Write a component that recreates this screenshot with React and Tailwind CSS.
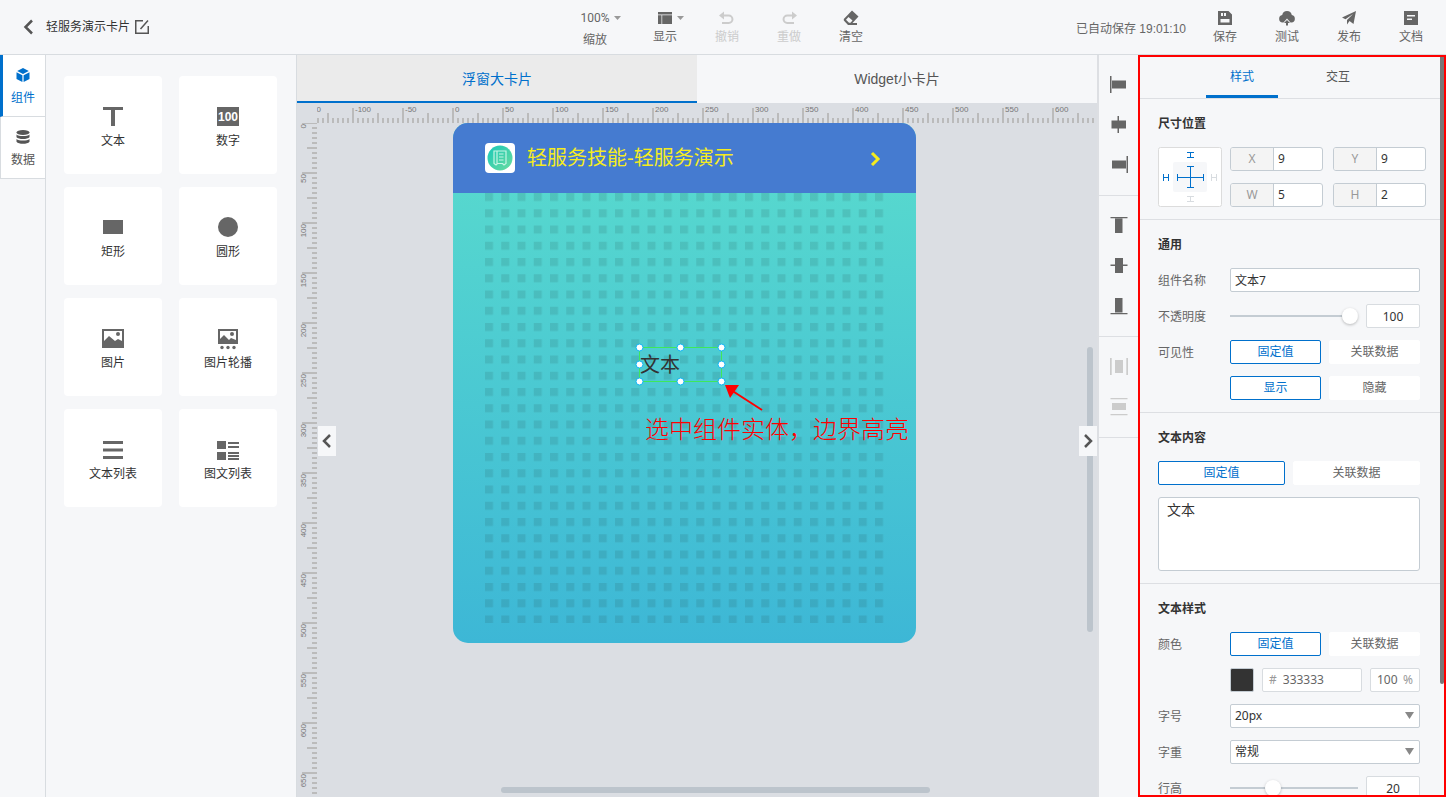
import React, { useLayoutEffect, useRef, useState } from 'react';

const DARK = '#666666';

const paletteItems = [
  { id: 'text', label: '文本' },
  { id: 'number', label: '数字' },
  { id: 'rect', label: '矩形' },
  { id: 'circle', label: '圆形' },
  { id: 'image', label: '图片' },
  { id: 'carousel', label: '图片轮播' },
  { id: 'list', label: '文本列表' },
  { id: 'imageList', label: '图文列表' }
];

const alignGroups = [
  [
    { id: 'left', label: '左对齐' },
    { id: 'hcenter', label: '水平居中' },
    { id: 'right', label: '右对齐' }
  ],
  [
    { id: 'top', label: '顶对齐' },
    { id: 'vcenter', label: '垂直居中' },
    { id: 'bottom', label: '底对齐' }
  ],
  [
    { id: 'hspace', label: '水平分布', disabled: true },
    { id: 'vspace', label: '垂直分布', disabled: true }
  ]
];

const PaletteIcon = ({ id }) => (
  <svg width="24" height="24" viewBox="0 0 24 24" fill={DARK} aria-hidden="true">
    {id === 'text' && <path d="M2 2h20v3h-8v16h-4V5H2z" />}
    {id === 'number' && (
      <>
        <rect x="1" y="2" width="22" height="19" />
        <text x="12" y="16" fontSize="12" fontWeight="700" fill="#fff" textAnchor="middle" fontFamily="Liberation Sans, sans-serif">100</text>
      </>
    )}
    {id === 'rect' && <rect x="2" y="4" width="20" height="14" />}
    {id === 'circle' && <circle cx="12" cy="11" r="10" />}
    {id === 'image' && (
      <path fillRule="evenodd" d="M1 2h22v19H1zM3 4v10l5-5 6 5 3-2 4 2V4zM17 5a2 2 0 1 1 0 4a2 2 0 0 1 0-4z" />
    )}
    {id === 'carousel' && (
      <>
        <path fillRule="evenodd" d="M2 2h20v15H2zM4 4v8l4-4 5 5 2-2 5 2V4zM16 5a2 2 0 1 1 0 4a2 2 0 0 1 0-4z" />
        <circle cx="6" cy="20.500" r="1.700" />
        <circle cx="12" cy="20.500" r="1.700" />
        <circle cx="18" cy="20.500" r="1.700" />
      </>
    )}
    {id === 'list' && <path d="M2 3h20v3H2zM2 10.500h20v3H2zM2 18h20v3H2z" />}
    {id === 'imageList' && (
      <path d="M1 3h9v8H1zM1 14h9v8H1zM12 4h11v2H12zM12 8h11v2H12zM12 14h11v2H12zM12 17h11v2H12zM12 20h11v2H12z" />
    )}
  </svg>
);

const AlignIcon = ({ id, disabled }) => (
  <svg width="20" height="20" viewBox="0 0 20 20" fill={disabled ? '#cccccc' : DARK} aria-hidden="true">
    {id === 'left' && <path d="M1 2h1.500v17H1zM3 6.500h14v8H3z" />}
    {id === 'hcenter' && <path d="M8.500 2h1.500v4.500h7v8h-7v4.500H8.500v-4.500H2.500v-8h6z" />}
    {id === 'right' && <path d="M17.500 2H19v17h-1.500zM3 6.500h14v8H3z" />}
    {id === 'top' && <path d="M1.500 2h17v1.200h-17zM6 3.500h7.500v14.500H6z" />}
    {id === 'vcenter' && <path d="M6 3h8v6.500h4.500V11H14v7H6v-7H1.500V9.500H6z" />}
    {id === 'bottom' && <path d="M1.500 18h17v1.200h-17zM6 3h7.500v14.500H6z" />}
    {id === 'hspace' && <path d="M1 2h1.700v17H1zM17.300 2H19v17h-1.700zM6 4h8v13H6z" />}
    {id === 'vspace' && <path d="M1.500 2h17v1.300h-17zM1.500 18h17v1.300h-17zM3 7h14v7H3z" />}
  </svg>
);

const ToolIcon = ({ id }) => (
  <svg width="16" height="16" viewBox="0 0 16 16" fill="currentColor" aria-hidden="true">
    {id === 'display' && <path d="M1 2h14v2.500H1zM1 5.300h3.500V14H1zM5.200 5.300H15V14H5.200z" />}
    {id === 'undo' && (
      <path d="M0 5.500l5-4v3h4.700a4.700 4.700 0 0 1 0 9.500H3v-2h6.700a2.700 2.700 0 0 0 0-5.500H5V9.500z" />
    )}
    {id === 'redo' && (
      <path d="M16 5.500l-5-4v3H6.300a4.700 4.700 0 0 0 0 9.500H13v-2H6.300a2.700 2.700 0 0 1 0-5.500H11V9.500z" />
    )}
    {id === 'clear' && (
      <path fillRule="evenodd" d="M9 .5l6.500 6-6 6.500H14v2H5L.8 10.500V9zM5.500 7L3 9.700l3 3h1.500L9.500 10.500z" />
    )}
    {id === 'save' && (
      <path fillRule="evenodd" d="M1 1h10.500L15 4.500V15H1zM4 3v3h2V3zM7 3v3h2V3zM3.500 9v3.500h9V9z" />
    )}
    {id === 'test' && (
      <path d="M8 1a5 5 0 0 1 4.800 4A3.800 3.800 0 0 1 12.500 12.500h-1L8 8.500l-3.500 4h-1A3.800 3.800 0 0 1 3.200 5 5 5 0 0 1 8 1zM8 10l3 3H9v2.500H7V13H5z" />
    )}
    {id === 'publish' && <path d="M15 1l-2.500 13-4-3L6 14.500V10l6-6-7.500 5.200L1 7.500z" />}
    {id === 'docs' && (
      <path fillRule="evenodd" d="M1 1h14v14H1zM4 5v1.500h8V5zM4 8.500V10h5V8.500z" />
    )}
  </svg>
);

const Caret = () => (
  <svg className="ml-1 text-[#999999]" width="7" height="4" viewBox="0 0 7 4" fill="currentColor" aria-hidden="true">
    <path d="M0 0h7L3.500 4z" />
  </svg>
);

const ToolButton = ({ id, label, disabled, caret }) => (
  <button
    type="button"
    disabled={disabled}
    className={`flex w-[62px] flex-col items-center gap-0.5 ${disabled ? 'text-[#cccccc]' : 'text-[#666666]'}`}
  >
    <span className="grid w-full grid-cols-[1fr_auto_1fr] items-center">
      <span />
      <ToolIcon id={id} />
      {caret ? <Caret /> : <span />}
    </span>
    <span className="leading-[18px]">{label}</span>
  </button>
);

// Marks from `from` up to `to`, one every 5 units
const rulerMarks = (from, to) => {
  const marks = [];
  for (let v = from; v <= to; v += 5) marks.push(v);
  return marks;
};

const markLength = (v) => (v % 50 === 0 ? 15 : v % 25 === 0 ? 10 : 5);

const useSize = () => {
  const ref = useRef(null);
  const [size, setSize] = useState({ width: 0, height: 0 });

  useLayoutEffect(() => {
    const update = () => {
      const { width, height } = ref.current.getBoundingClientRect();
      setSize({ width, height });
    };
    update();
    window.addEventListener('resize', update);
    return () => window.removeEventListener('resize', update);
  }, []);

  return [ref, size];
};

const HorizontalRuler = () => {
  const [ref, { width }] = useSize();
  const marks = rulerMarks(-150, width - 138);
  return (
    <div ref={ref} className="h-5 min-w-0 flex-1">
      <svg className="h-full w-full" fill="#bbbbbb" aria-hidden="true">
        {marks.map((v) => (
          <rect key={v} x={v + 135} y={20 - markLength(v)} width="2" height={markLength(v)} />
        ))}
        {marks.filter((v) => v % 50 === 0 && v + 156 < width).map((v) => (
          <text key={v} x={v + 138} y="9" fontSize="8" fill="#777777">{v}</text>
        ))}
      </svg>
    </div>
  );
};

const VerticalRuler = () => {
  const [ref, { height }] = useSize();
  const marks = rulerMarks(0, height);
  return (
    <div ref={ref} className="w-5 shrink-0">
      <svg className="h-full w-full" fill="#bbbbbb" aria-hidden="true">
        {marks.map((v) => (
          <rect key={v} x={20 - markLength(v)} y={v - 1} width={markLength(v)} height="2" />
        ))}
        {marks.filter((v) => v % 50 === 0 && v + 16 < height).map((v) => (
          <text key={v} transform={`translate(9 ${v + 1}) rotate(-90)`} textAnchor="end" fontSize="8" fill="#777777">{v}</text>
        ))}
      </svg>
    </div>
  );
};

const Header = () => (
  <header className="grid h-[55px] shrink-0 grid-cols-[1fr_auto_1fr] border-b border-[#d8dce0]">
    <div className="flex items-center pl-5">
      <button type="button" aria-label="返回">
        <svg width="16" height="16" viewBox="0 0 16 16" fill="none" stroke="#555555" strokeWidth="2.500" aria-hidden="true">
          <path d="M12 1.500L5.500 8l6.500 6.500" />
        </svg>
      </button>
      <h1 className="ml-2.5 text-[#333333]">轻服务演示卡片</h1>
      <button type="button" aria-label="编辑名称" className="ml-1">
        <svg width="16" height="16" viewBox="0 0 16 16" fill="none" stroke="#555555" strokeWidth="1.500" aria-hidden="true">
          <path d="M9 1.750H1.750v12.500h12.500V7M6.500 10L14 1.500" />
        </svg>
      </button>
    </div>
    <div className="flex items-start pt-2.5">
      <button type="button" className="mr-2 flex w-[62px] flex-col items-center gap-1 text-[#666666]">
        <span className="grid w-full grid-cols-[1fr_auto_1fr] items-center font-['Roboto'] leading-[16px]">
          <span />
          100%
          <Caret />
        </span>
        <span className="leading-[20px]">缩放</span>
      </button>
      <ToolButton id="display" label="显示" caret />
      <ToolButton id="undo" label="撤销" disabled />
      <ToolButton id="redo" label="重做" disabled />
      <ToolButton id="clear" label="清空" />
    </div>
    <div className="flex items-start justify-end pr-1 pt-2.5">
      <span className="mr-2 leading-[38px] text-[#666666]">已自动保存 19:01:10</span>
      <ToolButton id="save" label="保存" />
      <ToolButton id="test" label="测试" />
      <ToolButton id="publish" label="发布" />
      <ToolButton id="docs" label="文档" />
    </div>
  </header>
);

const SideRail = () => (
  <nav className="w-[46px] shrink-0 border-r border-[#d8dce0]">
    <button
      type="button"
      className="flex h-[62px] w-full flex-col items-center gap-1.5 border-b border-l-3 border-b-[#d8dce0] border-l-[#0070cc] bg-white pr-0.5 pt-3 text-[#0070cc]"
    >
      <svg width="14" height="16" viewBox="0 0 14 16" fill="currentColor" aria-hidden="true">
        <path d="M7 1l5.800 3L7 7 1.200 4zM.5 5.200L6.400 8.200v6.800L.5 12zM13.500 5.200L7.600 8.200v6.800l5.900-3z" />
      </svg>
      <span className="leading-[18px]">组件</span>
    </button>
    <button
      type="button"
      className="flex h-[62px] w-full flex-col items-center gap-1.5 border-b border-l border-[#d8dce0] bg-white pt-3 text-[#555555]"
    >
      <svg width="14" height="16" viewBox="0 0 14 16" fill="currentColor" aria-hidden="true">
        <ellipse cx="7" cy="3.500" rx="6.500" ry="2.500" />
        <path d="M.5 5.500c2 2 11 2 13 0v2.700c-2 2.400-11 2.400-13 0zM.5 10c2 2 11 2 13 0v2.700c-2 2.700-11 2.700-13 0z" />
      </svg>
      <span className="leading-[18px]">数据</span>
    </button>
  </nav>
);

const Palette = () => (
  <aside className="w-[251px] shrink-0 border-r border-[#d8dce0] pl-[18px] pt-[21px]">
    <div className="grid grid-cols-[98px_98px] gap-x-[17px] gap-y-[13px]">
      {paletteItems.map((item) => (
        <button
          key={item.id}
          type="button"
          className="flex h-[98px] flex-col items-center gap-[3px] rounded-[4px] bg-white pt-[29px] text-[#333333]"
        >
          <PaletteIcon id={item.id} />
          <span className="leading-[18px]">{item.label}</span>
        </button>
      ))}
    </div>
  </aside>
);

const SelectedText = () => (
  <div className="absolute left-[186px] top-[224px] h-[35px] w-[83px] border border-[#3ee85a]">
    <p className="text-[20px] leading-[35px] text-[#333333]">文本</p>
    <svg className="absolute -left-[5px] -top-[5px]" width="92" height="44" viewBox="0 0 92 44" fill="#fff" stroke="#10b4f5" aria-hidden="true">
      {[[4.5, 4.5], [45.5, 4.5], [86.5, 4.5], [4.5, 21.5], [86.5, 21.5], [4.5, 38.5], [45.5, 38.5], [86.5, 38.5]].map(([x, y]) => (
        <circle key={`${x}-${y}`} cx={x} cy={y} r="3.500" />
      ))}
    </svg>
  </div>
);

const CardPreview = () => (
  <div className="relative ml-[136px] flex h-[520px] w-[463px] shrink-0 flex-col rounded-[15px] bg-linear-to-b from-[#5adccd] to-[#3db7d6]">
    <div className="flex h-[70px] items-center rounded-t-[15px] bg-[#457bd0] px-8">
      <svg className="rounded-[4px] bg-white" width="30" height="30" viewBox="0 0 30 30" fill="none" aria-hidden="true">
        <defs>
          <linearGradient id="badge" x1="0" y1="0" x2="1" y2="1">
            <stop offset="0" stopColor="#18c8b8" />
            <stop offset="1" stopColor="#6cdca0" />
          </linearGradient>
        </defs>
        <circle cx="15" cy="15" r="12.500" fill="url(#badge)" />
        <path d="M9 8h12v12.500l-2 1.500-1.500-1.500h-5L11 22l-2-1.500zM12 8v12.500M14 11h4.500M14 14h4.500M14 17h4.500" stroke="#c5f5e4" strokeWidth="1.200" />
      </svg>
      <h2 className="ml-3 flex-1 text-[20px] leading-[30px] text-[#f5ec1e]">轻服务技能-轻服务演示</h2>
      <svg width="16" height="16" viewBox="0 0 16 16" fill="none" stroke="#f5ec1e" strokeWidth="3" aria-hidden="true">
        <path d="M4 3l6 6-6 6" />
      </svg>
    </div>
    <div className="flex flex-1 px-8 pb-5">
      <svg className="h-full w-full" aria-hidden="true">
        <defs>
          <pattern id="dots" width="16.250" height="16.250" patternUnits="userSpaceOnUse">
            <rect width="8" height="8" fill="#204040" fillOpacity="0.13" />
          </pattern>
        </defs>
        <rect width="399" height="430" fill="url(#dots)" />
      </svg>
    </div>
    <SelectedText />
    <svg className="absolute left-[270px] top-[258px]" width="44" height="32" viewBox="0 0 44 32" aria-hidden="true">
      <path d="M8 9l31 20" stroke="#f00" strokeWidth="2" />
      <path d="M2 4h14L7 17z" fill="#f00" />
    </svg>
    <p className="absolute left-[192px] top-[289px] whitespace-nowrap text-[24px] font-light leading-[36px] text-[#ff0000]">
      选中组件实体，边界高亮
    </p>
  </div>
);

const Workspace = () => {
  const [tab, setTab] = useState('large');
  const tabs = [
    { id: 'large', label: '浮窗大卡片' },
    { id: 'widget', label: 'Widget小卡片' }
  ];

  return (
    <main className="flex min-w-0 flex-1 flex-col bg-[#dbdee3]">
      <div className="flex h-12 shrink-0 bg-[#f6f7f9]">
        {tabs.map((t) => (
          <button
            key={t.id}
            type="button"
            onClick={() => setTab(t.id)}
            className={`flex-1 border-b-2 pt-0.5 text-sm ${tab === t.id ? 'border-[#0070cc] bg-[#ebebeb] text-[#0070cc]' : 'border-transparent text-[#555555]'}`}
          >
            {t.label}
          </button>
        ))}
      </div>
      <div className="flex shrink-0 pl-5">
        <HorizontalRuler />
      </div>
      <div className="flex min-h-0 flex-1">
        <VerticalRuler />
        <div className="relative min-w-0 flex-1 overflow-hidden">
          <CardPreview />
          {/* Stage scroll thumbs */}
          <div className="absolute right-1 top-[224px] h-[285px] w-1.5 rounded-full bg-[#bcc4cc]" />
          <div className="absolute bottom-1 left-[184px] h-1.5 w-[55%] rounded-full bg-[#bcc4cc]" />
          <button type="button" aria-label="收起左栏" className="absolute left-px top-[303px] flex h-[30px] w-[18px] items-center justify-center bg-[#f6f7f9]">
            <svg width="12" height="16" viewBox="0 0 12 16" fill="none" stroke="#555555" strokeWidth="2.500" aria-hidden="true">
              <path d="M9 2L3 8l6 6" />
            </svg>
          </button>
          <button type="button" aria-label="收起右栏" className="absolute right-0 top-[303px] flex h-[30px] w-[18px] items-center justify-center bg-[#f6f7f9]">
            <svg width="12" height="16" viewBox="0 0 12 16" fill="none" stroke="#555555" strokeWidth="2.500" aria-hidden="true">
              <path d="M3 2l6 6-6 6" />
            </svg>
          </button>
        </div>
      </div>
    </main>
  );
};

const AlignBar = () => (
  <aside className="w-[41px] shrink-0 border-l-2 border-[#dddfe3]">
    {alignGroups.map((group) => (
      <div key={group[0].id} className="flex flex-col items-center border-b border-[#dddfe3] pb-[11px] pt-[9px]">
        {group.map((item) => (
          <button
            key={item.id}
            type="button"
            disabled={item.disabled}
            aria-label={item.label}
            className="flex h-10 w-full items-center justify-center"
          >
            <AlignIcon id={item.id} disabled={item.disabled} />
          </button>
        ))}
      </div>
    ))}
  </aside>
);

const Section = ({ title, children }) => (
  <section className="border-b border-[#dddfe3] pb-3 pl-[18px] pr-5 pt-4 last:border-b-0">
    <h3 className="mb-3.5 font-bold leading-[18px] text-[#333333]">{title}</h3>
    <div className="flex flex-col gap-3">{children}</div>
  </section>
);

const Row = ({ label, htmlFor, children }) => (
  <div className="flex h-6 items-center">
    {htmlFor ? (
      <label htmlFor={htmlFor} className="w-[72px] shrink-0 pt-0.5 text-[#666666]">{label}</label>
    ) : (
      <span className="w-[72px] shrink-0 pt-0.5 text-[#666666]">{label}</span>
    )}
    <div className="flex min-w-0 flex-1 items-center gap-2">{children}</div>
  </div>
);

const Segmented = ({ options }) => {
  const [active, setActive] = useState(0);
  return (
    <div className="flex w-full gap-2">
      {options.map((option, index) => (
        <button
          key={option}
          type="button"
          onClick={() => setActive(index)}
          className={`h-6 flex-1 rounded-[2px] border bg-white leading-[20px] ${active === index ? 'border-[#0070cc] text-[#0070cc]' : 'border-white text-[#666666]'}`}
        >
          {option}
        </button>
      ))}
    </div>
  );
};

const Slider = ({ id, value, onChange }) => (
  <input
    id={id}
    type="range"
    min="0"
    max="100"
    value={value}
    onChange={(e) => onChange(Number(e.target.value))}
    className="h-4 w-0 min-w-0 flex-1 appearance-none bg-transparent [&::-webkit-slider-runnable-track]:h-[2px] [&::-webkit-slider-runnable-track]:bg-[#c4ccd3] [&::-webkit-slider-thumb]:-mt-[7px] [&::-webkit-slider-thumb]:h-4 [&::-webkit-slider-thumb]:w-4 [&::-webkit-slider-thumb]:appearance-none [&::-webkit-slider-thumb]:rounded-full [&::-webkit-slider-thumb]:bg-white [&::-webkit-slider-thumb]:shadow-[0_1px_3px_rgba(0,0,0,0.25)]"
  />
);

const NumberBox = ({ label, value, onChange }) => (
  <input
    aria-label={label}
    value={value}
    onChange={(e) => onChange(Number(e.target.value) || 0)}
    className="h-6 w-[54px] rounded-[2px] border border-[#d8dce0] bg-white text-center font-['Noto_Sans'] text-[#333333]"
  />
);

const SizeField = ({ name, defaultValue }) => (
  <label className="flex h-6 overflow-hidden rounded-[3px] border border-[#c4ccd3] bg-white">
    <span className="w-[43px] shrink-0 border-r border-[#c4ccd3] bg-[#f4f4f4] text-center font-['Noto_Sans'] leading-[22px] text-[#999999]">{name}</span>
    <input defaultValue={defaultValue} className="w-0 min-w-0 flex-1 pl-1 font-['Noto_Sans'] text-[#333333]" />
  </label>
);

const SelectBox = ({ id, options }) => (
  <div className="relative w-full">
    <select
      id={id}
      className="block h-6 w-full appearance-none rounded-[2px] border border-[#c4ccd3] bg-white pl-1 font-['Noto_Sans','Noto_Sans_CJK_SC',sans-serif] text-[#333333]"
    >
      {options.map((option) => <option key={option}>{option}</option>)}
    </select>
    <svg className="pointer-events-none absolute right-[5px] top-2" width="11" height="7" viewBox="0 0 11 7" fill="#888888" aria-hidden="true">
      <path d="M1 0h9L5.500 7z" />
    </svg>
  </div>
);

const AnchorBox = () => (
  <svg className="shrink-0" width="64" height="60" viewBox="0 0 64 60" fill="none" aria-hidden="true">
    <rect x="0.5" y="0.5" width="63" height="59" rx="2" fill="#fff" stroke="#dcdcdc" />
    <rect x="15" y="15" width="34" height="30" rx="2" fill="#f6f7f9" />
    <path stroke="#0070cc" d="M29 5.500h7M29 10.500h7M32.500 5.500v5M5.500 27v7M10.500 27v7M5.500 30.500h5M29 19.500h7M29 40.500h7M32.500 19.500v21M19.500 27v7M45.500 27v7M19.500 30.500h26" />
    <path stroke="#d8dce0" d="M53.500 27v7M58.500 27v7M53.500 30.500h5M29 49.500h7M29 54.500h7M32.500 49.500v5" />
  </svg>
);

const PropertyPanel = () => {
  const [opacity, setOpacity] = useState(100);
  const [lineHeight, setLineHeight] = useState(31);

  return (
    <aside className="flex w-[308px] shrink-0 overflow-hidden border-2 border-[#ff0000]">
      <div className="min-w-0 flex-1">
        <div className="flex h-[42px] justify-center border-b border-[#dddfe3]">
          <button type="button" className="mr-3 w-[72px] border-b-3 border-[#0070cc] pt-0.5 text-[#0070cc]">样式</button>
          <button type="button" className="ml-3 w-[72px] border-b-3 border-transparent pt-0.5 text-[#555555]">交互</button>
        </div>

        <Section title="尺寸位置">
          <div className="-mr-1.5 flex gap-2">
            <AnchorBox />
            <div className="grid flex-1 grid-cols-2 gap-x-2.5 gap-y-3">
              <SizeField name="X" defaultValue="9" />
              <SizeField name="Y" defaultValue="9" />
              <SizeField name="W" defaultValue="5" />
              <SizeField name="H" defaultValue="2" />
            </div>
          </div>
        </Section>

        <Section title="通用">
          <Row label="组件名称" htmlFor="name">
            <input
              id="name"
              defaultValue="文本7"
              className="h-6 w-full rounded-[2px] border border-[#c4ccd3] bg-white pl-1 font-['Noto_Sans','Noto_Sans_CJK_SC',sans-serif] text-[#333333]"
            />
          </Row>
          <Row label="不透明度" htmlFor="opacity">
            <Slider id="opacity" value={opacity} onChange={setOpacity} />
            <NumberBox label="不透明度数值" value={opacity} onChange={setOpacity} />
          </Row>
          <Row label="可见性">
            <Segmented options={['固定值', '关联数据']} />
          </Row>
          <Row>
            <Segmented options={['显示', '隐藏']} />
          </Row>
        </Section>

        <Section title="文本内容">
          <Segmented options={['固定值', '关联数据']} />
          <textarea
            aria-label="文本内容"
            defaultValue="文本"
            className="h-[74px] w-full resize-none rounded-[3px] border border-[#c4ccd3] bg-white px-2 py-0.5 text-sm text-[#333333]"
          />
        </Section>

        <Section title="文本样式">
          <Row label="颜色">
            <Segmented options={['固定值', '关联数据']} />
          </Row>
          <Row>
            <button type="button" aria-label="选择颜色" className="h-6 w-6 shrink-0 rounded-[2px] border border-[#c4ccd3] bg-[#333333]" />
            <label className="flex h-6 min-w-0 flex-1 items-center rounded-[2px] border border-[#d8dce0] bg-white pl-1.5 font-['Noto_Sans'] text-[#999999]">
              #
              <input defaultValue="333333" className="ml-1.5 w-0 min-w-0 flex-1 text-[#666666]" />
            </label>
            <label className="flex h-6 w-[50px] shrink-0 items-center rounded-[2px] border border-[#d8dce0] bg-white px-1.5 font-['Noto_Sans'] text-[#999999]">
              <input defaultValue="100" className="w-0 min-w-0 flex-1 text-[#666666]" />
              %
            </label>
          </Row>
          <Row label="字号" htmlFor="fontSize">
            <SelectBox id="fontSize" options={['20px', '24px', '28px']} />
          </Row>
          <Row label="字重" htmlFor="fontWeight">
            <SelectBox id="fontWeight" options={['常规', '加粗']} />
          </Row>
          <Row label="行高" htmlFor="lineHeight">
            <Slider id="lineHeight" value={lineHeight} onChange={setLineHeight} />
            <NumberBox label="行高数值" value={20} onChange={setLineHeight} />
          </Row>
        </Section>
      </div>
      <div className="w-1 shrink-0">
        <div className="h-[85%] rounded-b-full bg-[#777777]" />
      </div>
    </aside>
  );
};

const App = () => (
  <div className="flex h-screen flex-col overflow-hidden bg-[#f6f7f9] font-['Liberation_Sans','Noto_Sans_CJK_SC',sans-serif] text-xs">
    <Header />
    <div className="flex min-h-0 flex-1">
      <SideRail />
      <Palette />
      <Workspace />
      <AlignBar />
      <PropertyPanel />
    </div>
  </div>
);

export default App;
